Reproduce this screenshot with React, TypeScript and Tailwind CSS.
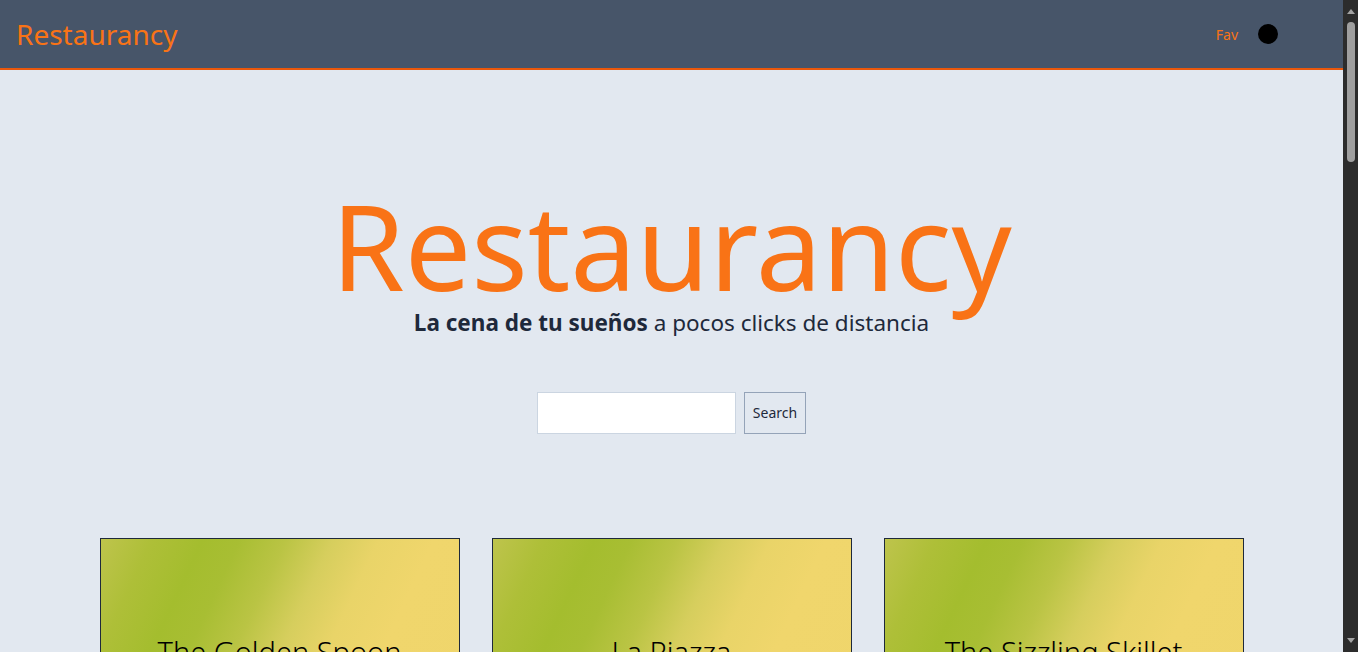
import React from "react";

const RESTAURANTS = [
  { id: 1, name: "The Golden Spoon" },
  { id: 2, name: "La Piazza" },
  { id: 3, name: "The Sizzling Skillet" },
];

function Header() {
  return (
    <header className="flex h-[70px] items-center justify-between border-b-2 border-[#ea580c] bg-[#475569] px-4">
      <a href="#" className="text-[28px] leading-none text-[#f97316]">Restaurancy</a>
      <nav className="mr-[49px] flex items-center gap-5">
        <a href="#" className="text-[14px] text-[#f97316]">Fav</a>
        <span className="h-5 w-5 rounded-full bg-black" />
      </nav>
    </header>
  );
}

function RestaurantCard({ name }: { name: string }) {
  return (
    <article className="flex h-[228px] items-center justify-center border border-[#1e293b] bg-[linear-gradient(115deg,#bec44c_0%,#aebf38_11%,#a4bd2e_22%,#a8be33_30%,#bac444_40%,#d6ce5d_50%,#e9d468_60%,#f0d66c_72%,#efd56b_100%)]">
      <h2 className="text-[29px] font-light text-black">{name}</h2>
    </article>
  );
}

// window scrollbar as seen in the screenshot (dark theme)
function Scrollbar() {
  return (
    <div className="flex w-[15px] shrink-0 flex-col items-center bg-[#2c2c2c] py-[9px]">
      <span className="h-0 w-0 border-x-[4px] border-b-[5px] border-x-transparent border-b-[#a3a3a3]" />
      <span className="mt-[8px] h-[140px] w-[8px] rounded-full bg-[#9f9f9f]" />
      <span className="mt-auto h-0 w-0 border-x-[4px] border-t-[5px] border-x-transparent border-t-[#a3a3a3]" />
    </div>
  );
}

export default function App() {
  return (
    <div className="flex h-screen font-['Noto_Sans',sans-serif]">
      <div className="min-w-0 flex-1 overflow-y-auto bg-[#e2e8f0] [scrollbar-width:none]">
        <Header />
        <main className="mx-auto flex max-w-[1144px] flex-col items-center pb-20">
          <section className="mt-[116px] flex flex-col items-center">
            <h1 className="text-[118px] leading-[120px] text-[#f97316]">Restaurancy</h1>
            <p className="text-[22.5px] text-[#1e293b]">
              <strong className="font-bold">La cena de tu sueños</strong> a pocos clicks de distancia
            </p>
          </section>
          <form className="mt-[52px] flex items-center gap-2" onSubmit={(e) => e.preventDefault()}>
            <input className="h-[42px] w-[199px] border border-[#cbd5e1] bg-white px-2" />
            <button className="h-[42px] border border-[#94a3b8] bg-[#e2e8f0] px-2 text-[14px] text-[#1e293b]">Search</button>
          </form>
          <section className="mt-[104px] grid w-full grid-cols-3 gap-8">
            {RESTAURANTS.map((r) => (
              <RestaurantCard key={r.id} name={r.name} />
            ))}
          </section>
        </main>
      </div>
      <Scrollbar />
    </div>
  );
}
